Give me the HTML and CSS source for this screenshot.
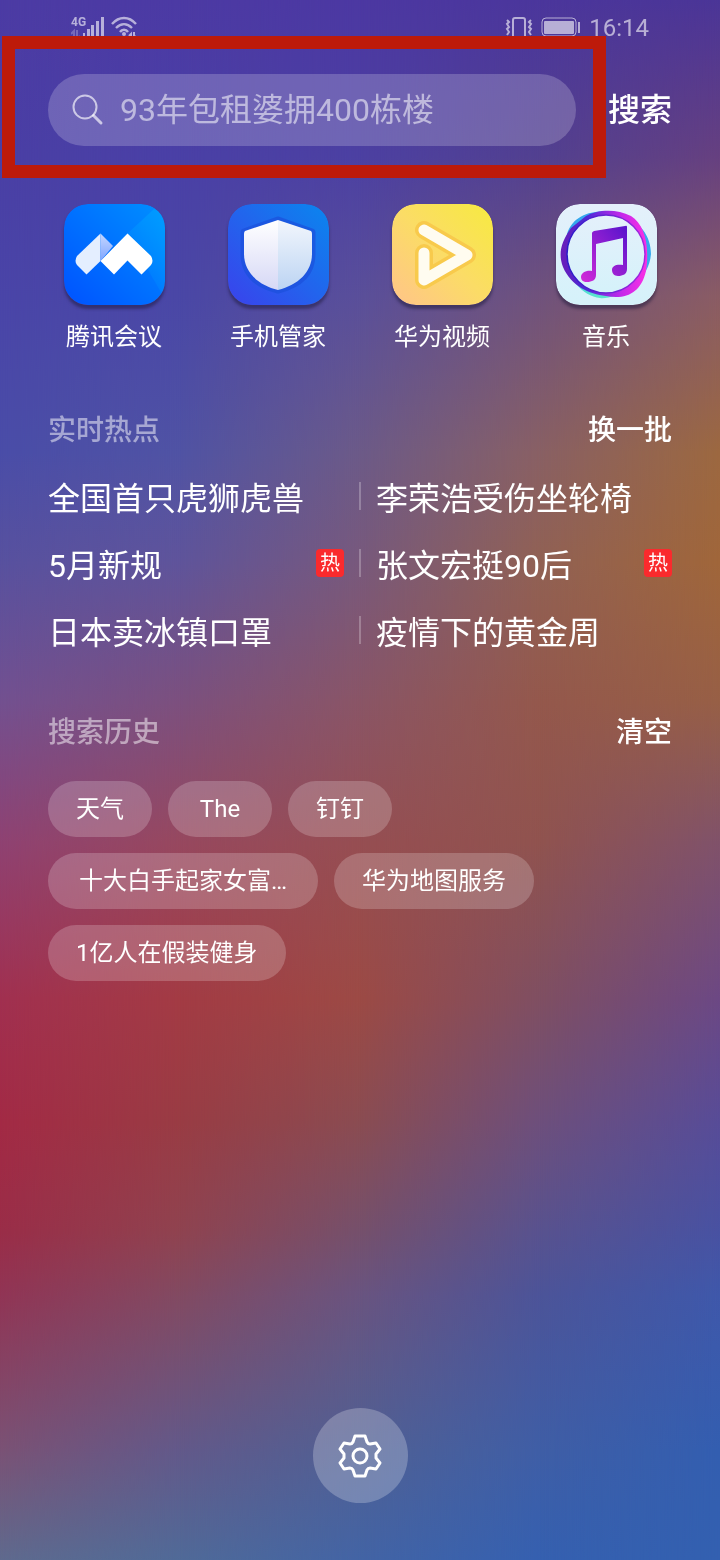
FILE: index.html
```
<!DOCTYPE html>
<html lang="zh-CN">

<head>
      <meta charset="UTF-8">
      <meta name="viewport" content="width=device-width, initial-scale=1.0">
      <title>搜索</title>
      <link rel="stylesheet" href="styles.css">
</head>

<body>
      <!-- 渐变壁纸 -->
      <div class="wallpaper">
            <div class="layer layer-1"></div>
            <div class="layer layer-2"></div>
            <div class="layer layer-3"></div>
            <div class="layer layer-4"></div>
            <div class="layer layer-5"></div>
      </div>

      <div class="page">
            <!-- 状态栏 -->
            <div class="status-bar">
                  <div class="status-left">
                        <svg width="36" height="28" viewBox="0 0 36 28" fill="currentColor">
                              <text class="net" x="0" y="14">4G</text>
                              <path opacity=".4" d="M3 28v-9l-3 3M6 18v9l3-3" fill="none" stroke="currentColor" stroke-width="2" />
                              <path d="M12 21h2v7h-2zM16 17h3v11h-3zM20 13h3v15h-3zM25 9h3v19h-3zM30 5h3v23h-3z" />
                        </svg>
                        <svg width="28" height="28" viewBox="0 0 28 28" fill="none" stroke="currentColor" stroke-width="2.4">
                              <path d="M2 12C9 4 19 4 26 12M6 16C11 11 17 11 22 16M10 20C12 17 16 17 18 20" />
                              <circle cx="14" cy="22" r="2" fill="currentColor" stroke="none" />
                              <path d="M21 28v-6l-2 2M24 20v6l2-2" stroke-width="2" />
                        </svg>
                  </div>
                  <div class="status-right">
                        <svg width="28" height="28" viewBox="0 0 28 28" fill="none" stroke="currentColor" stroke-width="2">
                              <rect x="8" y="6" width="12" height="20" rx="2" />
                              <path d="M2 8l2 2-2 2 2 3-2 2 2 3-2 3M26 8l-2 2 2 2-2 3 2 2-2 3 2 3" />
                        </svg>
                        <svg width="40" height="28" viewBox="0 0 40 28" fill="none" stroke="currentColor">
                              <rect x="1" y="6" width="34" height="18" rx="4" />
                              <rect x="3" y="9" width="30" height="13" rx="1" fill="currentColor" stroke="none" />
                              <path d="M38 10v11" stroke-width="2" />
                        </svg>
                        <span class="time">16:14</span>
                  </div>
            </div>

            <!-- 搜索框 -->
            <form class="search-row">
                  <div class="search-box">
                        <svg class="search-icon" width="32" height="32" viewBox="0 0 32 32" fill="none" stroke="currentColor" stroke-linecap="round">
                              <circle cx="13" cy="13" r="11.5" stroke-width="2" />
                              <path d="M21.5 21.5L29 29" stroke-width="3" />
                        </svg>
                        <input type="text" class="search-input" aria-label="搜索" placeholder="93年包租婆拥400栋楼">
                        <div class="highlight"></div>
                  </div>
                  <button type="button" class="text-button search-button">搜索</button>
            </form>

            <!-- 应用 -->
            <div class="apps">
                  <a href="#" class="app">
                        <svg class="app-icon" viewBox="0 0 101 101">
                              <defs>
                                    <linearGradient id="meetBg" x1="0" y1="1" x2="1" y2="0">
                                          <stop offset="0" stop-color="#0052ff" />
                                          <stop offset="1" stop-color="#0090ff" />
                                    </linearGradient>
                                    <linearGradient id="meetFold" x1="0" y1="0" x2="0" y2="1">
                                          <stop offset="0" stop-color="#c5d6ff" />
                                          <stop offset="1" stop-color="#7fa5ff" />
                                    </linearGradient>
                                    <linearGradient id="meetLight" x1="1" y1="0" x2=".4" y2="1">
                                          <stop offset="0" stop-color="#00a2ff" stop-opacity=".7" />
                                          <stop offset="1" stop-color="#00a2ff" stop-opacity="0" />
                                    </linearGradient>
                              </defs>
                              <rect width="101" height="101" rx="24" fill="url(#meetBg)" />
                              <path d="M90 5L101 10V95L63 30z" fill="url(#meetLight)" />
                              <path d="M36.5 29.5L13 52Q10 57 13 61L22.5 70.5 36.5 57z" fill="#e4eeff" />
                              <path d="M36.5 29.5L49 42 36.5 57z" fill="url(#meetFold)" />
                              <path d="M63.5 29.5L36.5 57 50 70.5 63.5 56.5 77.5 70.5 87 61Q90 57 87 52z" fill="#fff" />
                        </svg>
                        <span class="app-name">腾讯会议</span>
                  </a>
                  <a href="#" class="app">
                        <svg class="app-icon" viewBox="0 0 101 101">
                              <defs>
                                    <linearGradient id="guardBg" x1="0" y1="1" x2="1" y2="0">
                                          <stop offset="0" stop-color="#3a42ec" />
                                          <stop offset="1" stop-color="#0a86ee" />
                                    </linearGradient>
                                    <linearGradient id="guardL" x1="0" y1="0" x2="0" y2="1">
                                          <stop offset="0" stop-color="#fff" />
                                          <stop offset="1" stop-color="#d6d8f6" />
                                    </linearGradient>
                                    <linearGradient id="guardR" x1="0" y1="0" x2="0" y2="1">
                                          <stop offset="0" stop-color="#f2f6fc" />
                                          <stop offset="1" stop-color="#bcd4f3" />
                                    </linearGradient>
                              </defs>
                              <rect width="101" height="101" rx="24" fill="url(#guardBg)" />
                              <path d="M50 16L84 28V50C84 70 70 81 50 86 30 81 16 70 16 50V28z" fill="#1b50dc" stroke="#1b50dc" stroke-opacity=".7" stroke-width="7" stroke-linejoin="round" />
                              <path d="M50 16L17 27Q16 28 16 30V50C16 68 30 81 50 86z" fill="url(#guardL)" />
                              <path d="M50 16L83 27Q84 28 84 30V50C84 68 70 81 50 86z" fill="url(#guardR)" />
                        </svg>
                        <span class="app-name">手机管家</span>
                  </a>
                  <a href="#" class="app">
                        <svg class="app-icon" viewBox="0 0 101 101">
                              <defs>
                                    <linearGradient id="videoBg" x1="0" y1="1" x2="1" y2="0">
                                          <stop offset="0" stop-color="#ffc48a" />
                                          <stop offset=".5" stop-color="#fbdc66" />
                                          <stop offset="1" stop-color="#f7ea40" />
                                    </linearGradient>
                              </defs>
                              <rect width="101" height="101" rx="24" fill="url(#videoBg)" />
                              <g fill="none" stroke-linecap="round" stroke-linejoin="round">
                                    <path d="M32 26L75 51 32 76V49" stroke="#f8ca4c" stroke-width="18" />
                                    <path d="M32 26L75 51 32 76V49" stroke="#fffcf0" stroke-width="11" />
                              </g>
                        </svg>
                        <span class="app-name">华为视频</span>
                  </a>
                  <a href="#" class="app">
                        <svg class="app-icon" viewBox="0 0 101 101">
                              <defs>
                                    <linearGradient id="musicBg" x1="0" y1="0" x2="0" y2="1">
                                          <stop offset="0" stop-color="#e4f0fb" />
                                          <stop offset="1" stop-color="#d5f2fa" />
                                    </linearGradient>
                                    <linearGradient id="musicWave" x1="0" y1="0" x2="0" y2="1">
                                          <stop offset="0" stop-color="#35a8ee" />
                                          <stop offset=".6" stop-color="#35a8ee" />
                                          <stop offset="1" stop-color="#5ce8cc" />
                                    </linearGradient>
                                    <linearGradient id="musicRing" x1="0" y1="0" x2="1" y2="0">
                                          <stop offset="0" stop-color="#6a1cb8" />
                                          <stop offset=".3" stop-color="#4a2ad8" />
                                          <stop offset=".7" stop-color="#c428ea" />
                                          <stop offset="1" stop-color="#fb30e4" />
                                    </linearGradient>
                                    <linearGradient id="musicInner" x1="0" y1="0" x2="1" y2="0">
                                          <stop offset="0" stop-color="#2a1cc8" />
                                          <stop offset="1" stop-color="#a428e0" />
                                    </linearGradient>
                                    <linearGradient id="musicNote" x1="0" y1="1" x2="1" y2="0">
                                          <stop offset="0" stop-color="#d32bd8" />
                                          <stop offset="1" stop-color="#5614cc" />
                                    </linearGradient>
                              </defs>
                              <rect width="101" height="101" rx="24" fill="url(#musicBg)" />
                              <path d="M11 30C18 8 42 5 60 9 85 16 95 33 95 50 94 62 88 72 80 80 64 92 50 95 44 94 35 93 27 88 20 80z" fill="url(#musicWave)" />
                              <path d="M15 24C5 38 2 50 7 63 15 82 33 90 50 92 70 96 85 89 90 67 94 40 88 20 75 12 60 4 40 6 30 12z" fill="url(#musicRing)" />
                              <circle cx="50" cy="50" r="39" fill="url(#musicBg)" stroke="url(#musicInner)" stroke-width="1.5" />
                              <path d="M36 29Q36 28 38 27L69 22Q71 21 71 23V65C71 70 67 72 62 72 58 72 56 69 56 66 56 62 60 60 67 61V34L40 40V71C40 76 36 78 31 78 27 78 25 76 25 73 25 69 30 66 36 67z" fill="url(#musicNote)" />
                        </svg>
                        <span class="app-name">音乐</span>
                  </a>
            </div>

            <!-- 实时热点 -->
            <div class="section">
                  <div class="section-header">
                        <h2>实时热点</h2>
                        <button type="button" class="text-button">换一批</button>
                  </div>
                  <div class="hot-list">
                        <a href="#" class="hot-item">全国首只虎狮虎兽</a>
                        <a href="#" class="hot-item">李荣浩受伤坐轮椅</a>
                        <a href="#" class="hot-item">5月新规<span class="hot-tag">热</span></a>
                        <a href="#" class="hot-item">张文宏挺90后<span class="hot-tag">热</span></a>
                        <a href="#" class="hot-item">日本卖冰镇口罩</a>
                        <a href="#" class="hot-item">疫情下的黄金周</a>
                  </div>
            </div>

            <!-- 搜索历史 -->
            <div class="section">
                  <div class="section-header">
                        <h2>搜索历史</h2>
                        <button type="button" class="text-button">清空</button>
                  </div>
                  <div class="history">
                        <button type="button" class="chip">天气</button>
                        <button type="button" class="chip">The</button>
                        <button type="button" class="chip">钉钉</button>
                        <button type="button" class="chip chip-long">十大白手起家女富…</button>
                        <button type="button" class="chip">华为地图服务</button>
                        <button type="button" class="chip">1亿人在假装健身</button>
                  </div>
            </div>

            <!-- 设置 -->
            <button type="button" class="settings" aria-label="设置">
                  <svg width="48" height="48" viewBox="-24 -24 48 48" fill="none" stroke="currentColor" stroke-width="3" stroke-linejoin="round">
                        <path d="M-5-20H5L7-14Q8-12 10-12L16-13 20-7 16-2V2L20 7 16 13 10 12Q8 12 7 14L5 20H-5L-7 14Q-8 12-10 12L-16 13-20 7-16 2V-2L-20-7-16-13-10-12Q-8-12-7-14z" />
                        <circle r="7" />
                  </svg>
            </button>
      </div>
</body>

</html>
```
FILE: styles.css
```
* {
      box-sizing: border-box;
}

body {
      margin: 0;
      color: #fff;
      font-family: Roboto, "Noto Sans CJK SC", sans-serif;
}

a {
      color: inherit;
      text-decoration: none;
}

button,
input {
      padding: 0;
      border: none;
      background: none;
      color: inherit;
      font-family: inherit;
}

button {
      cursor: pointer;
}

/* 壁纸：五列颜色，每一列向下一列渐变 */
.wallpaper {
      position: fixed;
      inset: 0;
      z-index: -1;
}

.layer {
      position: absolute;
      inset: 0;
}

.layer-1 {
      background: linear-gradient(#4c3ba4 0%, #4a3fa5 10%, #4a45a8 19%, #4a4da8 29%, #58519f 36%, #735090 45%, #8f4272 54%, #a13050 64%, #a32a45 72%, #9a2d48 79%, #913555 83%, #7a5275 93%, #5f6a8e 100%);
}

.layer-2 {
      background: linear-gradient(#4c3aa4 0%, #4a40a6 10%, #4a47a6 19%, #5053a4 29%, #5f549b 36%, #7c507e 45%, #97485f 54%, #a33b44 64%, #993c44 72%, #8f4350 79%, #824a62 83%, #62598a 93%, #506a98 100%);
      mask-image: linear-gradient(to right, transparent 0%, #000 25%);
}

.layer-3 {
      background: linear-gradient(#4c38a2 0%, #4c40a2 10%, #5a4f9a 19%, #6c5a88 29%, #78597c 36%, #8a5566 45%, #964e52 54%, #9c4a45 64%, #8a4c52 72%, #75506c 79%, #695480 83%, #506094 93%, #4364a5 100%);
      mask-image: linear-gradient(to right, transparent 25%, #000 50%);
}

.layer-4 {
      background: linear-gradient(#4b369c 0%, #524090 10%, #70527c 19%, #896064 29%, #916154 36%, #94584c 45%, #90534f 54%, #7f4f62 64%, #6d4f7c 72%, #58528f 79%, #4c5499 83%, #3f5ea6 93%, #3560b0 100%);
      mask-image: linear-gradient(to right, transparent 50%, #000 75%);
}

.layer-5 {
      background: linear-gradient(#4b3597 0%, #664080 10%, #8a5c64 19%, #9c6840 29%, #a0663a 36%, #975f46 45%, #80526a 54%, #6c4884 64%, #574c98 72%, #4852a2 79%, #3f58aa 83%, #335eb0 93%, #3360b0 100%);
      mask-image: linear-gradient(to right, transparent 75%, #000 100%);
}

.page {
      display: flex;
      flex-direction: column;
      min-height: 100vh;
      padding: 12px 48px 57px;
}

/* 状态栏 */
.status-bar {
      display: flex;
      justify-content: space-between;
      height: 62px;
      padding: 0 23px;
      color: rgba(255, 255, 255, 0.6);
}

.status-left,
.status-right {
      display: flex;
      align-items: flex-start;
      gap: 3px;
}

.status-right {
      gap: 8px;
}

.net {
      font-size: 12px;
      font-weight: 700;
}

.time {
      font-size: 24px;
      line-height: 32px;
}

/* 搜索框 */
.search-row {
      display: flex;
      align-items: center;
      gap: 32px;
}

.search-box {
      position: relative;
      display: flex;
      flex: 1;
      align-items: center;
      gap: 16px;
      height: 72px;
      padding: 0 24px;
      border-radius: 36px;
      background-color: rgba(255, 255, 255, 0.2);
}

.search-icon {
      flex: none;
      color: rgba(255, 255, 255, 0.65);
}

.search-input {
      flex: 1;
      min-width: 0;
      height: 72px;
      outline: none;
      font-size: 32px;
}

.search-input::placeholder {
      color: rgba(255, 255, 255, 0.55);
}

/* 搜索框外的红框 */
.highlight {
      position: absolute;
      inset: -38px -30px -32px -46px;
      border: 13px solid #bd1a0a;
      pointer-events: none;
}

.text-button {
      font-size: 28px;
      font-weight: 500;
      line-height: 40px;
}

.search-button {
      font-size: 32px;
}

/* 应用图标 */
.apps {
      display: grid;
      grid-template-columns: repeat(4, 1fr);
      margin: 58px -16px 6px;
}

.app {
      display: flex;
      flex-direction: column;
      align-items: center;
      gap: 14px;
}

.app-icon {
      width: 101px;
      height: 101px;
      border-radius: 24px;
      box-shadow: 0 4px 3px rgba(30, 25, 60, 0.5);
}

.app-name {
      font-size: 24px;
      line-height: 36px;
}

/* 热点和历史 */
.section {
      margin-top: 50px;
}

.section-header {
      display: flex;
      justify-content: space-between;
      align-items: center;
}

.section-header h2 {
      margin: 0;
      color: rgba(255, 255, 255, 0.5);
      font-size: 28px;
      font-weight: 500;
      line-height: 40px;
}

.hot-list {
      display: grid;
      grid-template-columns: 1fr 1fr;
      column-gap: 32px;
      margin-top: 11px;
}

.hot-item {
      position: relative;
      display: flex;
      justify-content: space-between;
      align-items: center;
      height: 67px;
      font-size: 32px;
}

.hot-item:nth-child(even)::before {
      content: '';
      position: absolute;
      left: -17px;
      width: 2px;
      height: 28px;
      background-color: rgba(255, 255, 255, 0.25);
}

.hot-tag {
      width: 28px;
      height: 28px;
      border-radius: 4px;
      background-color: #fa2a2d;
      font-size: 20px;
      line-height: 28px;
      text-align: center;
}

.history {
      display: flex;
      flex-wrap: wrap;
      gap: 16px;
      margin-top: 28px;
}

.chip {
      min-width: 104px;
      height: 56px;
      padding: 0 28px;
      border-radius: 28px;
      background-color: rgba(255, 255, 255, 0.2);
      font-size: 24px;
      line-height: 56px;
}

.chip-long {
      padding: 0 31px;
}

/* 设置按钮 */
.settings {
      display: flex;
      justify-content: center;
      align-items: center;
      align-self: center;
      width: 95px;
      height: 95px;
      margin-top: auto;
      border-radius: 50%;
      background-color: rgba(255, 255, 255, 0.24);
}
```
